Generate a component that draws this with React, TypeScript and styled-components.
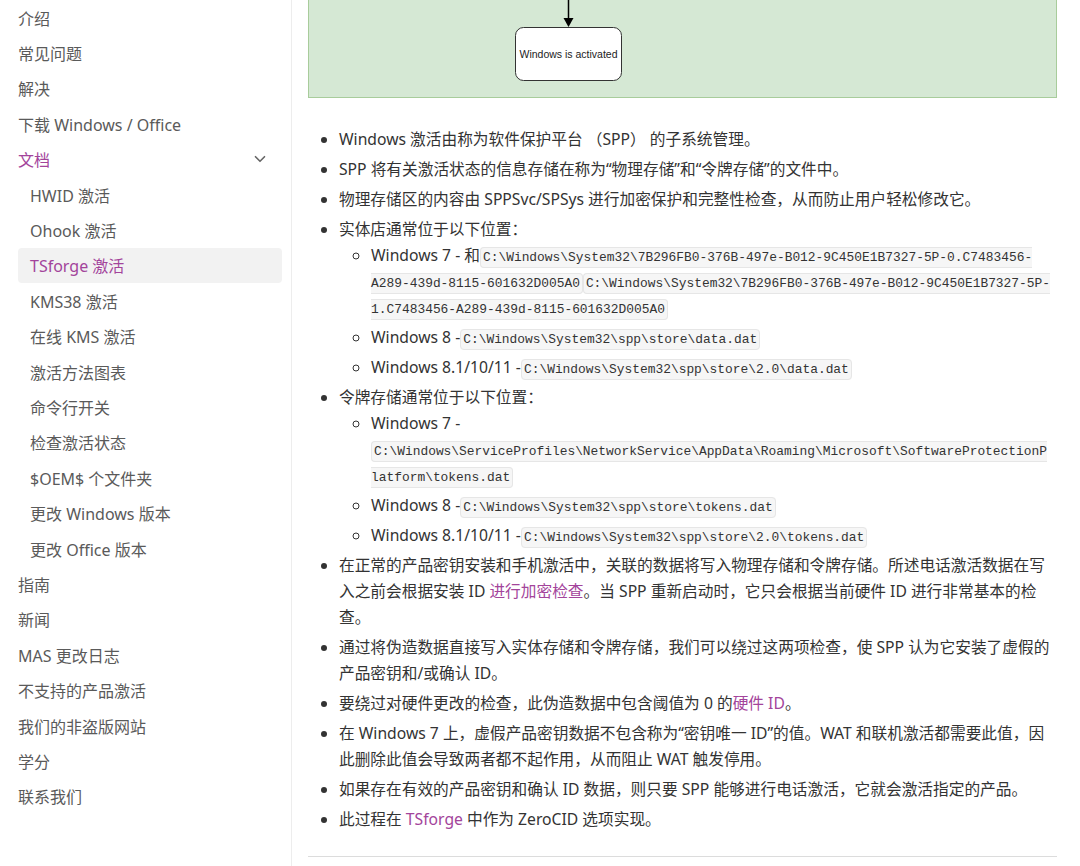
import React from 'react';
import styled, { createGlobalStyle } from 'styled-components';

const GlobalStyle = createGlobalStyle`
  html, body {
    margin: 0;
    padding: 0;
    background: #fff;
  }
  body {
    font-family: "Noto Sans", "Noto Sans CJK SC", sans-serif;
    color: #333;
  }
`;

const Page = styled.div`
  display: flex;
  width: 1080px;
  height: 866px;
  overflow: hidden;
`;

const Sidebar = styled.nav`
  width: 292px;
  flex-shrink: 0;
  border-right: 1px solid #ededed;
  padding-right: 9px;
  box-sizing: border-box;
`;

const NavList = styled.ul`
  list-style: none;
  margin: 0;
  padding: 0;
`;

const NavItem = styled.li<{ $open?: boolean }>`
  display: flex;
  align-items: center;
  justify-content: space-between;
  height: 35.4px;
  padding-left: 18px;
  padding-right: 13px;
  font-size: 16px;
  color: ${p => (p.$open ? '#a3449b' : '#5a5a5a')};
`;

const SubList = styled.ul`
  list-style: none;
  margin: 0 0 0 18px;
  padding: 0;
`;

const SubItem = styled.li<{ $active?: boolean }>`
  height: 35.4px;
  display: flex;
  align-items: center;
  padding-left: 12px;
  font-size: 16px;
  border-radius: 4px;
  color: ${p => (p.$active ? '#a3449b' : '#5a5a5a')};
  background: ${p => (p.$active ? '#f2f2f2' : 'transparent')};
`;

const Main = styled.main`
  width: 749px;
  margin-left: 16px;
`;

const Diagram = styled.div`
  height: 98px;
  background: #d5e8d4;
  border: 1px solid #a8cc9b;
  border-top: none;
  box-sizing: border-box;
`;

const Bullets = styled.ul`
  margin: 28px 4px 0 0;
  padding-left: 31px;
  font-size: 15.7px;
  line-height: 26px;
  list-style: disc;

  & > li {
    margin-top: 4px;
  }
`;

const Circles = styled.ul`
  margin: 0;
  padding-left: 32px;
  list-style: circle;

  & > li {
    margin-top: 4px;
  }
  & > li:first-child {
    margin-top: 0;
  }
`;

const Code = styled.code`
  font-family: "Liberation Mono", "DejaVu Sans Mono", monospace;
  font-size: 12.9px;
  line-height: 1.15;
  background: #f6f6f6;
  border: 1px solid #e6e6e6;
  border-radius: 4px;
  padding: 2px 2px;
  overflow-wrap: anywhere;
  color: #333;
`;

const Link = styled.a`
  color: #a3449b;
  text-decoration: none;
`;

const Rule = styled.hr`
  border: none;
  border-top: 1px solid #dcdcdc;
  margin: 24px 0 0;
`;

const Chevron = () => (
  <svg width="18" height="18" viewBox="0 0 24 24" fill="none" stroke="#666" strokeWidth="2.2" strokeLinecap="round" strokeLinejoin="round">
    <polyline points="6 9 12 15 18 9" />
  </svg>
);

const top = ['介绍', '常见问题', '解决', '下载 Windows / Office'];
const docs = [
  'HWID 激活',
  'Ohook 激活',
  'TSforge 激活',
  'KMS38 激活',
  '在线 KMS 激活',
  '激活方法图表',
  '命令行开关',
  '检查激活状态',
  '$OEM$ 个文件夹',
  '更改 Windows 版本',
  '更改 Office 版本',
];
const bottom = ['指南', '新闻', 'MAS 更改日志', '不支持的产品激活', '我们的非盗版网站', '学分', '联系我们'];

const App: React.FC = () => {
  return (
    <Page>
      <GlobalStyle />
      <Sidebar>
        <NavList>
          {top.map(t => (
            <NavItem key={t}>{t}</NavItem>
          ))}
          <NavItem $open>
            文档
            <Chevron />
          </NavItem>
          <li>
            <SubList>
              {docs.map(d => (
                <SubItem key={d} $active={d === 'TSforge 激活'}>
                  {d}
                </SubItem>
              ))}
            </SubList>
          </li>
          {bottom.map(t => (
            <NavItem key={t}>{t}</NavItem>
          ))}
        </NavList>
      </Sidebar>

      <Main>
        <Diagram>
          <svg width="747" height="97" viewBox="0 0 747 97">
            <line x1="259.5" y1="0" x2="259.5" y2="20" stroke="#000" strokeWidth="1.5" />
            <polygon points="254.5,18 264.5,18 259.5,27" fill="#000" />
            <rect x="206.5" y="27.5" width="106" height="53" rx="8" fill="#fff" stroke="#333" strokeWidth="1" />
            <text x="259.5" y="57.5" textAnchor="middle" fontFamily="Liberation Sans, Arial, sans-serif" fontSize="10.5" fill="#222">
              Windows is activated
            </text>
          </svg>
        </Diagram>

        <Bullets>
          <li>Windows 激活由称为软件保护平台 （SPP） 的子系统管理。</li>
          <li>SPP 将有关激活状态的信息存储在称为“物理存储”和“令牌存储”的文件中。</li>
          <li>物理存储区的内容由 SPPSvc/SPSys 进行加密保护和完整性检查，从而防止用户轻松修改它。</li>
          <li>
            实体店通常位于以下位置：
            <Circles>
              <li>
                Windows 7 - 和<Code>C:\Windows\System32\7B296FB0-376B-497e-B012-9C450E1B7327-5P-0.C7483456-A289-439d-8115-601632D005A0</Code>
                <Code>C:\Windows\System32\7B296FB0-376B-497e-B012-9C450E1B7327-5P-1.C7483456-A289-439d-8115-601632D005A0</Code>
              </li>
              <li>
                Windows 8 -<Code>C:\Windows\System32\spp\store\data.dat</Code>
              </li>
              <li>
                Windows 8.1/10/11 -<Code>C:\Windows\System32\spp\store\2.0\data.dat</Code>
              </li>
            </Circles>
          </li>
          <li>
            令牌存储通常位于以下位置：
            <Circles>
              <li>
                Windows 7 -<Code>C:\Windows\ServiceProfiles\NetworkService\AppData\Roaming\Microsoft\SoftwareProtectionPlatform\tokens.dat</Code>
              </li>
              <li>
                Windows 8 -<Code>C:\Windows\System32\spp\store\tokens.dat</Code>
              </li>
              <li>
                Windows 8.1/10/11 -<Code>C:\Windows\System32\spp\store\2.0\tokens.dat</Code>
              </li>
            </Circles>
          </li>
          <li>
            在正常的产品密钥安装和手机激活中，关联的数据将写入物理存储和令牌存储。所述电话激活数据在写入之前会根据安装 ID <Link>进行加密检查</Link>。当 SPP 重新启动时，它只会根据当前硬件 ID 进行非常基本的检查。
          </li>
          <li>通过将伪造数据直接写入实体存储和令牌存储，我们可以绕过这两项检查，使 SPP 认为它安装了虚假的产品密钥和/或确认 ID。</li>
          <li>
            要绕过对硬件更改的检查，此伪造数据中包含阈值为 0 的<Link>硬件 ID</Link>。
          </li>
          <li>在 Windows 7 上，虚假产品密钥数据不包含称为“密钥唯一 ID”的值。WAT 和联机激活都需要此值，因此删除此值会导致两者都不起作用，从而阻止 WAT 触发停用。</li>
          <li>如果存在有效的产品密钥和确认 ID 数据，则只要 SPP 能够进行电话激活，它就会激活指定的产品。</li>
          <li>
            此过程在 <Link>TSforge</Link> 中作为 ZeroCID 选项实现。
          </li>
        </Bullets>
        <Rule />
      </Main>
    </Page>
  );
};

export default App;
